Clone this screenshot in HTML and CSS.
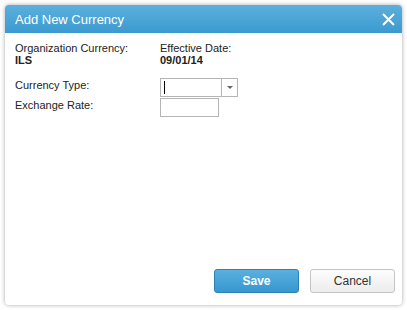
FILE: index.html
```html
<!DOCTYPE html>
<html lang="en">

<head>
    <meta charset="UTF-8">
    <meta name="viewport" content="width=device-width, initial-scale=1.0">
    <title>Add New Currency</title>
    <link rel="stylesheet" href="styles.css">
</head>

<body>
    <div class="dialog">
        <div class="dialog-header">
            <span class="dialog-title">Add New Currency</span>
            <span class="dialog-close">
                <svg width="13" height="13" viewBox="0 0 13 13">
                    <path d="M1 1 L12 12 M12 1 L1 12" stroke="#fff" stroke-width="2" fill="none" />
                </svg>
            </span>
        </div>
        <div class="dialog-body">
            <div class="info-row">
                <div class="info-col">
                    <div class="info-label">Organization Currency:</div>
                    <div class="info-value">ILS</div>
                </div>
                <div class="info-col">
                    <div class="info-label">Effective Date:</div>
                    <div class="info-value">09/01/14</div>
                </div>
            </div>
            <div class="form-row">
                <label class="form-label">Currency Type:</label>
                <div class="combo">
                    <div class="combo-input"><span class="caret"></span></div>
                    <div class="combo-arrow"></div>
                </div>
            </div>
            <div class="form-row">
                <label class="form-label">Exchange Rate:</label>
                <div class="text-input"></div>
            </div>
        </div>
        <div class="dialog-footer">
            <button class="btn btn-primary">Save</button>
            <button class="btn btn-default">Cancel</button>
        </div>
    </div>
</body>

</html>
```

FILE: styles.css
```css
body {
    font-family: "Liberation Sans", Arial, sans-serif;
    margin: 0;
    padding: 5px;
    background: #fff;
    width: 397px;
    height: 300px;
}

.dialog {
    height: 300px;
    display: flex;
    flex-direction: column;
    background: #fff;
    border-radius: 4px;
    box-shadow: 0 0 4px rgba(0, 0, 0, 0.35);
    overflow: hidden;
}

.dialog-header {
    height: 28px;
    display: flex;
    align-items: center;
    justify-content: space-between;
    padding: 0 5px 0 10px;
    background: linear-gradient(#5cb0dc, #3b9ad0);
    color: #fff;
}

.dialog-title {
    font-size: 13px;
}

.dialog-close {
    display: flex;
    width: 17px;
    justify-content: center;
}

.dialog-body {
    flex: 1;
    padding: 9px 10px 0 10px;
    font-size: 11px;
    color: #222;
}

.info-row {
    display: flex;
    margin-bottom: 12px;
}

.info-col {
    width: 145px;
}

.info-value {
    font-weight: bold;
}

.form-row {
    display: flex;
    margin-bottom: 1px;
}

.form-label {
    width: 145px;
    padding-top: 1px;
}

.combo {
    display: flex;
    height: 19px;
    border: 1px solid #b5b5b5;
    box-sizing: border-box;
    width: 78px;
}

.combo-input {
    width: 57px;
    border-right: 1px solid #b5b5b5;
    display: flex;
    align-items: center;
    padding-left: 3px;
}

.caret {
    width: 1px;
    height: 13px;
    background: #000;
}

.combo-arrow {
    flex: 1;
    display: flex;
    align-items: center;
    justify-content: center;
}

.combo-arrow::after {
    content: "";
    border-left: 3px solid transparent;
    border-right: 3px solid transparent;
    border-top: 3px solid #666;
}

.text-input {
    width: 59px;
    height: 19px;
    border: 1px solid #b5b5b5;
    box-sizing: border-box;
}

.dialog-footer {
    display: flex;
    justify-content: flex-end;
    gap: 11px;
    padding: 0 7px 12px 0;
}

.btn {
    width: 85px;
    height: 24px;
    font-family: "Liberation Sans", Arial, sans-serif;
    font-size: 12px;
    border-radius: 3px;
    cursor: pointer;
}

.btn-primary {
    background: linear-gradient(#5ab0df, #3797cf);
    border: 1px solid #2d82b5;
    color: #fff;
    font-weight: bold;
}

.btn-default {
    background: linear-gradient(#fdfdfd, #ececec);
    border: 1px solid #c4c4c4;
    color: #333;
}
```
